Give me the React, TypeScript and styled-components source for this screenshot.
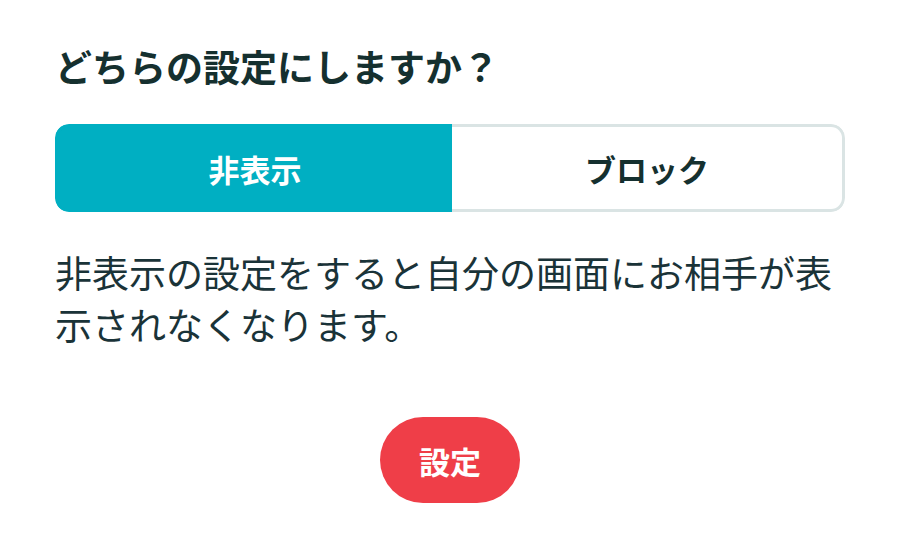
import React, { useState } from "react";
import styled, { createGlobalStyle } from "styled-components";

const GlobalStyle = createGlobalStyle`
  html, body {
    margin: 0;
    padding: 0;
    background: #ffffff;
  }
  body {
    font-family: "Noto Sans CJK JP", "Noto Sans", sans-serif;
    color: #15302f;
  }
`;

type Mode = "hide" | "block";

const Page = styled.div`
  display: flex;
  flex-direction: column;
  padding: 41px 55px 0;
  width: 900px;
  height: 533px;
  box-sizing: border-box;
`;

const Title = styled.h1`
  margin: 0;
  font-size: 37px;
  line-height: 50px;
  font-weight: 700;
  color: #15302f;
`;

const Segments = styled.div`
  display: flex;
  margin-top: 33px;
  height: 88px;
  border-radius: 14px;
  overflow: hidden;
`;

const Segment = styled.button<{ $active: boolean; $side: "left" | "right" }>`
  flex: ${(p) => (p.$side === "left" ? "0 0 397px" : "1")};
  display: flex;
  align-items: center;
  justify-content: center;
  margin: 0;
  padding: 0;
  box-sizing: border-box;
  border: 3px solid ${(p) => (p.$active ? "#00afc2" : "#dae4e4")};
  ${(p) => (p.$side === "left" ? "border-right: none;" : "border-left: none;")}
  border-radius: ${(p) => (p.$side === "left" ? "14px 0 0 14px" : "0 14px 14px 0")};
  font-family: inherit;
  font-size: 31px;
  font-weight: 700;
  cursor: pointer;
  background: ${(p) => (p.$active ? "#00afc2" : "#ffffff")};
  color: ${(p) => (p.$active ? "#ffffff" : "#15302f")};
`;

const Description = styled.p`
  margin: 34px 0 0;
  font-size: 37px;
  line-height: 52px;
  color: #1a3338;
`;

const Footer = styled.div`
  display: flex;
  justify-content: center;
  margin-top: 67px;
`;

const SubmitButton = styled.button`
  width: 140px;
  height: 86px;
  border: none;
  border-radius: 43px;
  background: #ef3e48;
  color: #ffffff;
  font-family: inherit;
  font-size: 31px;
  font-weight: 700;
  cursor: pointer;
`;

const App: React.FC = () => {
  const [mode, setMode] = useState<Mode>("hide");

  return (
    <>
      <GlobalStyle />
      <Page>
        <Title>どちらの設定にしますか？</Title>
        <Segments>
          <Segment $side="left" $active={mode === "hide"} onClick={() => setMode("hide")}>
            非表示
          </Segment>
          <Segment $side="right" $active={mode === "block"} onClick={() => setMode("block")}>
            ブロック
          </Segment>
        </Segments>
        <Description>
          {mode === "hide"
            ? "非表示の設定をすると自分の画面にお相手が表示されなくなります。"
            : "ブロックの設定をするとお相手とのやりとりができなくなります。"}
        </Description>
        <Footer>
          <SubmitButton>設定</SubmitButton>
        </Footer>
      </Page>
    </>
  );
};

export default App;
